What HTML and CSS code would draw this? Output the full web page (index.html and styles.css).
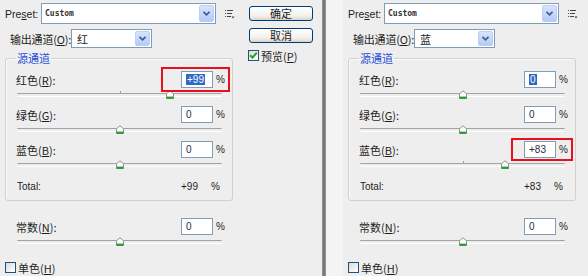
FILE: index.html
```html
<!DOCTYPE html>
<html>
<head>
<meta charset="utf-8">
<link rel="stylesheet" href="styles.css">
</head>
<body>
<div class="dialog">
  <section class="panel">
    <div class="main">
      <div class="row-preset">
        <span class="lbl-preset">Pre<u>s</u>et:</span>
        <div class="select sel-preset"><span class="sel-text mono">Custom</span><span class="sel-btn"><svg width="7" height="5" viewBox="0 0 7 5"><path d="M0.5 0.8 L3.5 3.8 L6.5 0.8" fill="none" stroke="#3d5a8c" stroke-width="1.6"/></svg></span></div>
        <svg class="menu-icon" width="10" height="9" viewBox="0 0 10 9"><rect x="0" y="0" width="1" height="1" fill="#555"/><rect x="0" y="3" width="1" height="1" fill="#555"/><rect x="0" y="6" width="1" height="1" fill="#555"/><rect x="2" y="0" width="6" height="1" fill="#444"/><rect x="2" y="3" width="5" height="1" fill="#444"/><rect x="2" y="6" width="4" height="1" fill="#444"/><path d="M6.5 6.5 H9.5 L8 8.5 Z" fill="#444"/></svg>
      </div>
      <div class="row-output">
        <span class="lbl-output">输出通道(<u>O</u>):</span>
        <div class="select sel-output"><span class="sel-text">红</span><span class="sel-btn"><svg width="7" height="5" viewBox="0 0 7 5"><path d="M0.5 0.8 L3.5 3.8 L6.5 0.8" fill="none" stroke="#3d5a8c" stroke-width="1.6"/></svg></span></div>
      </div>
      <fieldset class="group">
        <legend>源通道</legend>
        <div class="channel">
          <div class="ch-row"><span class="ch-label">红色(<u>R</u>):</span><span class="num"><span class="hl">+99</span></span><span class="pct">%</span></div>
          <div class="slider"><span class="tick"></span><span class="thumb" style="left:74.75%"><svg width="9" height="9" viewBox="0 0 9 9"><path d="M1 8.5 V3.8 L4.5 0.8 L8 3.8 V8.5 Z" fill="#fff" stroke="#8a968a"/><rect x="1" y="6.6" width="7" height="2.2" fill="#2c9a35"/></svg></span></div>
        </div>
        <div class="channel">
          <div class="ch-row"><span class="ch-label">绿色(<u>G</u>):</span><span class="num">0</span><span class="pct">%</span></div>
          <div class="slider"><span class="tick"></span><span class="thumb" style="left:50%"><svg width="9" height="9" viewBox="0 0 9 9"><path d="M1 8.5 V3.8 L4.5 0.8 L8 3.8 V8.5 Z" fill="#fff" stroke="#8a968a"/><rect x="1" y="6.6" width="7" height="2.2" fill="#2c9a35"/></svg></span></div>
        </div>
        <div class="channel">
          <div class="ch-row"><span class="ch-label">蓝色(<u>B</u>):</span><span class="num">0</span><span class="pct">%</span></div>
          <div class="slider"><span class="tick"></span><span class="thumb" style="left:50%"><svg width="9" height="9" viewBox="0 0 9 9"><path d="M1 8.5 V3.8 L4.5 0.8 L8 3.8 V8.5 Z" fill="#fff" stroke="#8a968a"/><rect x="1" y="6.6" width="7" height="2.2" fill="#2c9a35"/></svg></span></div>
        </div>
        <div class="total"><span class="total-label">Total:</span><span class="total-val">+99</span><span class="total-pct">%</span></div>
      </fieldset>
      <div class="channel const">
        <div class="ch-row"><span class="ch-label">常数(<u>N</u>):</span><span class="num">0</span><span class="pct">%</span></div>
        <div class="slider"><span class="tick"></span><span class="thumb" style="left:50%"><svg width="9" height="9" viewBox="0 0 9 9"><path d="M1 8.5 V3.8 L4.5 0.8 L8 3.8 V8.5 Z" fill="#fff" stroke="#8a968a"/><rect x="1" y="6.6" width="7" height="2.2" fill="#2c9a35"/></svg></span></div>
      </div>
      <div class="mono-row"><span class="check"></span><span class="check-text">单色(<u>H</u>)</span></div>
    </div>
    <div class="side">
      <div class="btn">确定</div>
      <div class="btn">取消</div>
      <div class="preview"><span class="check"><svg width="9" height="9" viewBox="0 0 9 9"><path d="M1.2 4.2 L3.5 6.6 L7.8 1.6" fill="none" stroke="#21a121" stroke-width="2"/></svg></span><span class="check-text">预览(<u>P</u>)</span></div>
    </div>
    <div class="callout callout-left"></div>
  </section>

  <div class="divider"><span class="div-dark"></span><span class="div-light"></span></div>

  <section class="panel panel-right">
    <div class="main">
      <div class="row-preset">
        <span class="lbl-preset">Pre<u>s</u>et:</span>
        <div class="select sel-preset"><span class="sel-text mono">Custom</span><span class="sel-btn"><svg width="7" height="5" viewBox="0 0 7 5"><path d="M0.5 0.8 L3.5 3.8 L6.5 0.8" fill="none" stroke="#3d5a8c" stroke-width="1.6"/></svg></span></div>
        <svg class="menu-icon" width="10" height="9" viewBox="0 0 10 9"><rect x="0" y="0" width="1" height="1" fill="#555"/><rect x="0" y="3" width="1" height="1" fill="#555"/><rect x="0" y="6" width="1" height="1" fill="#555"/><rect x="2" y="0" width="6" height="1" fill="#444"/><rect x="2" y="3" width="5" height="1" fill="#444"/><rect x="2" y="6" width="4" height="1" fill="#444"/><path d="M6.5 6.5 H9.5 L8 8.5 Z" fill="#444"/></svg>
      </div>
      <div class="row-output">
        <span class="lbl-output">输出通道(<u>O</u>):</span>
        <div class="select sel-output"><span class="sel-text">蓝</span><span class="sel-btn"><svg width="7" height="5" viewBox="0 0 7 5"><path d="M0.5 0.8 L3.5 3.8 L6.5 0.8" fill="none" stroke="#3d5a8c" stroke-width="1.6"/></svg></span></div>
      </div>
      <fieldset class="group">
        <legend>源通道</legend>
        <div class="channel">
          <div class="ch-row"><span class="ch-label">红色(<u>R</u>):</span><span class="num"><span class="hl">0</span></span><span class="pct">%</span></div>
          <div class="slider"><span class="tick"></span><span class="thumb" style="left:50%"><svg width="9" height="9" viewBox="0 0 9 9"><path d="M1 8.5 V3.8 L4.5 0.8 L8 3.8 V8.5 Z" fill="#fff" stroke="#8a968a"/><rect x="1" y="6.6" width="7" height="2.2" fill="#2c9a35"/></svg></span></div>
        </div>
        <div class="channel">
          <div class="ch-row"><span class="ch-label">绿色(<u>G</u>):</span><span class="num">0</span><span class="pct">%</span></div>
          <div class="slider"><span class="tick"></span><span class="thumb" style="left:50%"><svg width="9" height="9" viewBox="0 0 9 9"><path d="M1 8.5 V3.8 L4.5 0.8 L8 3.8 V8.5 Z" fill="#fff" stroke="#8a968a"/><rect x="1" y="6.6" width="7" height="2.2" fill="#2c9a35"/></svg></span></div>
        </div>
        <div class="channel">
          <div class="ch-row"><span class="ch-label">蓝色(<u>B</u>):</span><span class="num">+83</span><span class="pct">%</span></div>
          <div class="slider"><span class="tick"></span><span class="thumb" style="left:70.75%"><svg width="9" height="9" viewBox="0 0 9 9"><path d="M1 8.5 V3.8 L4.5 0.8 L8 3.8 V8.5 Z" fill="#fff" stroke="#8a968a"/><rect x="1" y="6.6" width="7" height="2.2" fill="#2c9a35"/></svg></span></div>
        </div>
        <div class="total"><span class="total-label">Total:</span><span class="total-val">+83</span><span class="total-pct">%</span></div>
      </fieldset>
      <div class="channel const">
        <div class="ch-row"><span class="ch-label">常数(<u>N</u>):</span><span class="num">0</span><span class="pct">%</span></div>
        <div class="slider"><span class="tick"></span><span class="thumb" style="left:50%"><svg width="9" height="9" viewBox="0 0 9 9"><path d="M1 8.5 V3.8 L4.5 0.8 L8 3.8 V8.5 Z" fill="#fff" stroke="#8a968a"/><rect x="1" y="6.6" width="7" height="2.2" fill="#2c9a35"/></svg></span></div>
      </div>
      <div class="mono-row"><span class="check"></span><span class="check-text">单色(<u>H</u>)</span></div>
    </div>
    <div class="callout callout-right"></div>
  </section>
</div>
</body>
</html>
```

FILE: styles.css
```css
* { box-sizing: border-box; }
html, body { margin: 0; padding: 0; }
body {
  width: 588px;
  height: 276px;
  overflow: hidden;
  background: #eeeeee;
  color: #1e1e1e;
  font-family: "Liberation Sans", "Noto Sans CJK SC", sans-serif;
  font-size: 10px;
  line-height: 14px;
  white-space: nowrap;
}
u { text-decoration: underline; text-underline-offset: 1px; }
.dialog { display: flex; width: 588px; height: 276px; overflow: hidden; }
.panel {
  position: relative;
  flex: none;
  width: 322px;
  height: 276px;
  display: flex;
}
.panel-right { width: 245px; overflow: hidden; }
.main { width: 240px; flex: none; }
.side { width: 64px; margin-left: 9px; padding-top: 6px; flex: none; }

.row-preset { display: flex; align-items: center; height: 21px; margin-top: 3px; }
.lbl-preset { width: 41px; flex: none; padding-left: 5px; font-size: 10.5px; }
.select {
  position: relative;
  flex: none;
  display: flex;
  align-items: center;
  background: #fff;
  border: 1px solid #7f9db9;
}
.sel-preset { width: 175px; height: 21px; }
.sel-output { width: 81px; height: 19px; }
.sel-text { flex: 1; padding-left: 3px; }
.sel-output .sel-text { padding-left: 5px; font-family: "Noto Sans CJK SC", sans-serif; font-size: 11px; }
.mono { font-family: "DejaVu Sans Mono", monospace; font-size: 8px; font-weight: bold; color: #333; }
.sel-btn {
  align-self: stretch;
  width: 15px;
  margin: 1px;
  display: flex;
  align-items: center;
  justify-content: center;
  border-radius: 2px;
  background: linear-gradient(#d6e3fd, #b5cbf6);
  border: 1px solid #bcd0f5;
}
.menu-icon { flex: none; margin-left: 9px; margin-top: 2px; }

.row-output { display: flex; align-items: center; height: 19px; margin-top: 5px; }
.lbl-output {
  width: 71px;
  flex: none;
  padding-left: 10px;
  font-family: "Noto Sans CJK SC", sans-serif;
  font-size: 11px;
  letter-spacing: -0.2px;
  overflow: visible;
}

.group {
  margin: 3px 0 0 5px;
  width: 228px;
  min-width: 0;
  padding: 6px 9px 6px 10px;
  border: 1px solid #d0d0cc;
  border-radius: 3px;
  box-shadow: 1px 1px 0 #fafafa inset;
}
.group legend {
  padding: 0 1px;
  line-height: 14px;
  font-family: "Noto Sans CJK SC", sans-serif;
  font-size: 11px;
  color: #1f4fd6;
}
.channel { height: 35px; }
.const { margin: 17px 0 0 16px; width: 207px; }
.ch-row { display: flex; align-items: center; height: 17px; }
.ch-label {
  flex: 1;
  font-family: "Noto Sans CJK SC", sans-serif;
  font-size: 11px;
}
.num {
  width: 32px;
  height: 17px;
  flex: none;
  background: #fff;
  border: 1px solid #7f9db9;
  padding-left: 4px;
  font-size: 10px;
  line-height: 15px;
  color: #2a2a4a;
}
.hl { background: #3168c7; color: #fff; padding: 0 1px; }
.pct { width: 10px; flex: none; padding-left: 3px; font-size: 10px; }
.slider {
  position: relative;
  height: 10px;
  margin: 1px 1px 0 1px;
}
.slider::before {
  content: "";
  position: absolute;
  left: 0; right: 0; top: 4px;
  height: 2px;
  border-top: 1px solid #a3a3a3;
  border-bottom: 1px solid #ffffff;
  border-radius: 1px;
}
.tick {
  position: absolute;
  left: 50%;
  top: 2px;
  width: 1px;
  height: 3px;
  background: #a0a0a0;
}
.thumb {
  position: absolute;
  top: 1px;
  width: 9px;
  height: 9px;
  transform: translateX(-50%);
  display: block;
}
.thumb svg { display: block; }
.total { display: flex; align-items: center; height: 14px; margin-top: 4px; padding-left: 1px; }
.total-label { flex: 1; }
.total-val { width: 30px; flex: none; }
.total-pct { width: 12px; flex: none; }

.mono-row { display: flex; align-items: center; margin: 9px 0 0 5px; height: 11px; }
.check {
  width: 11px;
  height: 11px;
  flex: none;
  border: 1px solid #1c5180;
  background: linear-gradient(135deg, #dcdcd5, #ffffff);
  display: flex;
  align-items: center;
  justify-content: center;
}
.check-text {
  margin-left: 2px;
  font-family: "Noto Sans CJK SC", sans-serif;
  font-size: 11px;
}

.btn {
  width: 64px;
  height: 15px;
  margin-bottom: 7px;
  border: 1px solid #003c74;
  border-radius: 3px;
  background: linear-gradient(#ffffff, #f1f0ec 70%, #d8d3c8);
  text-align: center;
  font-family: "Noto Sans CJK SC", sans-serif;
  font-size: 11px;
  line-height: 13px;
}
.preview { display: flex; align-items: center; margin: 5px 0 0 -1px; height: 11px; }

.divider { flex: none; width: 21px; height: 276px; display: flex; }
.div-dark { width: 4px; background: linear-gradient(90deg, #9a9a9a, #6e6e6e 50%, #9a9a9a); }
.div-light { flex: 1; background: #f4f4f4; }

.callout { position: absolute; border: 2px solid #e8101c; }
.callout-left { left: 161px; top: 67px; width: 69px; height: 25px; }
.callout-right { left: 168px; top: 138px; width: 62px; height: 23px; }
```
